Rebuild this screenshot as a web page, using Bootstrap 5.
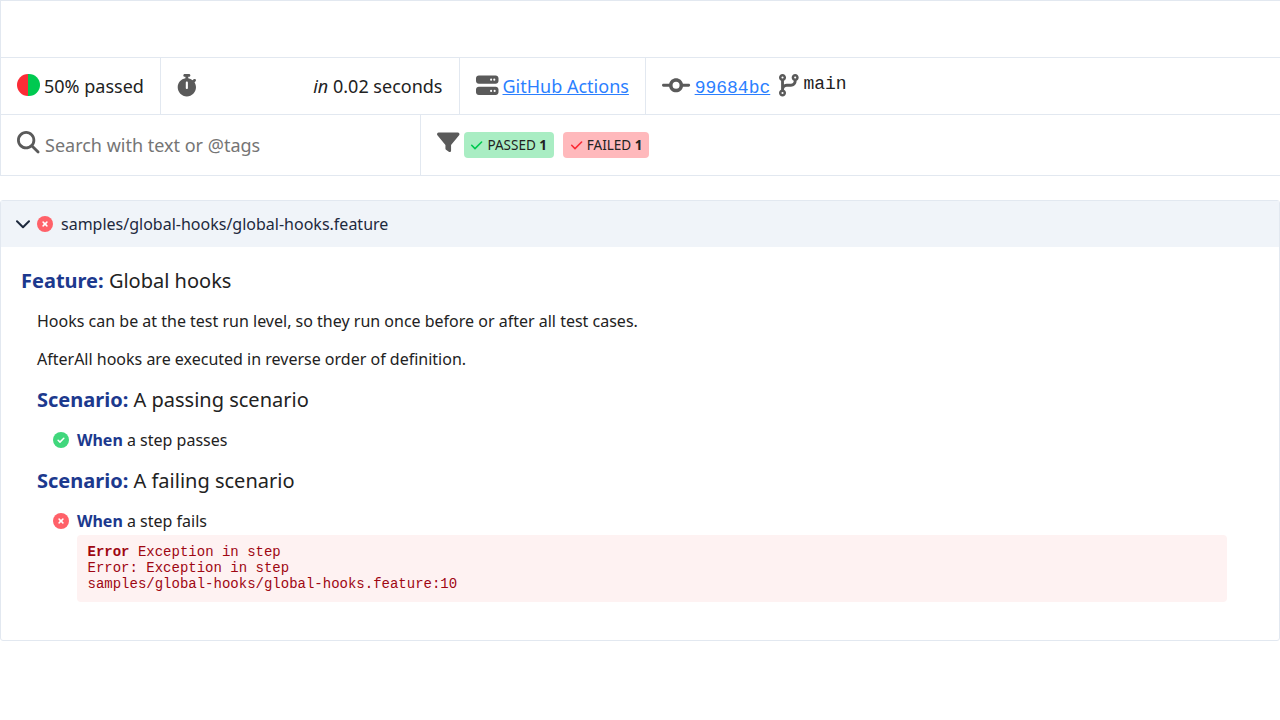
<!DOCTYPE html>
<html lang="en">
<head>
<meta charset="utf-8">
<meta name="viewport" content="width=device-width, initial-scale=1">
<title>Cucumber report</title>
<link href="https://cdn.jsdelivr.net/npm/bootstrap@5.3.0/dist/css/bootstrap.min.css" rel="stylesheet">
<style>
:root{--line:#e2e8f0;--keyword:#1c398e;--link:#2b7fff}
body{font-family:"Noto Sans",sans-serif;color:#222;font-size:16px;line-height:24px;overflow:hidden}
.summary{border:1px solid var(--line);border-right:0;font-size:18px;line-height:27px;margin-bottom:24px}
.summary-row{border-bottom:1px solid var(--line);height:57px}
.summary-row:last-child{border-bottom:0;height:60px}
.cell{display:flex;align-items:center;gap:4px;padding:0 16px;border-right:1px solid var(--line);white-space:nowrap}
.cell:last-child{border-right:0}
.cell-rate{width:160px;gap:4.5px}.cell-time{width:299px;padding-right:16.5px}.cell-ci{width:186px}.cell-search{width:420px;gap:5.5px}
.ico{height:22.5px;fill:#5a5a5a;flex:none;display:block;overflow:visible;margin-bottom:2px}
.filters .ico{margin-bottom:6px}
.summary a{color:var(--link)}
.mono{font-family:"Liberation Mono",monospace}
.hash{margin-left:.5px;margin-top:4px}
.branch-ico{margin-left:5px}
.branch-name{margin-bottom:4px;margin-left:.5px}
.pie{width:22.5px;height:22.5px;border-radius:50%;margin-bottom:2px;background:linear-gradient(90deg,#fb2c36 50%,#00c950 50%)}
.search-input{font-size:18px;line-height:27px;color:#222;background:none;outline:0}
.search-input::placeholder{color:#757575;opacity:1}
.status{font-size:13.5px;line-height:20px;height:26px;padding:0 6.75px;border-radius:4px;display:flex;align-items:center;gap:4.25px}
.status svg,.mark-icon{flex:none}
.status-pass{background:#a9edc3}
.status-fail{background:#ffb9bc;margin-left:5px}
.feature{border:1px solid var(--line);border-radius:3px;height:441px}
.feature-head{background:#f0f4f9;height:46px;padding-left:15px;color:#1d293d}
.chevron{margin-right:7px}
.feature-body{padding:19px 20px 0}
h1,h2{font-size:20px;line-height:30px;font-weight:400;margin:0 0 13px}
.desc{margin-bottom:14px}
.kw{color:var(--keyword);font-weight:700}
.step{gap:8px;margin-bottom:14px}
.step-failed{margin-bottom:0}
.trace{margin:2px 32px 0 40px;padding:9px 10.5px;height:67px;border-radius:4px;background:#fef2f2;color:#9f0712;font:14px/16px "Liberation Mono",monospace;overflow:visible}
</style>
</head>
<body>
<svg width="0" height="0" class="position-absolute" aria-hidden="true">
  <symbol id="failed" viewBox="0 0 16 16"><circle cx="8" cy="8" r="8" fill="#ff6169"/><path d="M6.1 6.1l3.8 3.8M9.9 6.1l-3.8 3.8" fill="none" stroke="#fff" stroke-width="1.5" stroke-linecap="round"/></symbol>
  <symbol id="passed" viewBox="0 0 16 16"><circle cx="8" cy="8" r="8" fill="#40d77c"/><path d="M5.1 8.2l1.9 1.9 3.8-3.8" fill="none" stroke="#fff" stroke-width="1.5" stroke-linecap="round" stroke-linejoin="round"/></symbol>
</svg>
<header class="summary">
  <div class="summary-row"></div>
  <div class="summary-row d-flex">
    <div class="cell cell-rate"><span class="pie"></span><span>50% passed</span></div>
    <div class="cell cell-time justify-content-between">
      <svg class="ico" viewBox="0 0 448 512"><path d="M176 0c-17.7 0-32 14.3-32 32s14.3 32 32 32h16V98.4C92.3 113.8 16 200 16 304c0 114.9 93.1 208 208 208s208-93.1 208-208c0-41.8-12.3-80.7-33.5-113.2l24.1-24.1c12.5-12.5 12.5-32.8 0-45.3s-32.8-12.5-45.3 0L355.7 143c-28.1-23-62.2-38.8-99.7-44.6V64h16c17.7 0 32-14.3 32-32s-14.3-32-32-32H224 176zm72 192V320c0 13.3-10.7 24-24 24s-24-10.7-24-24V192c0-13.3 10.7-24 24-24s24 10.7 24 24z"/></svg>
      <span><em>in</em> 0.02 seconds</span>
    </div>
    <div class="cell cell-ci">
      <svg class="ico" viewBox="0 0 512 512"><path d="M64 32C28.7 32 0 60.7 0 96v64c0 35.3 28.7 64 64 64H448c35.3 0 64-28.7 64-64V96c0-35.3-28.7-64-64-64H64zm280 72a24 24 0 1 1 0 48 24 24 0 1 1 0-48zm48 24a24 24 0 1 1 48 0 24 24 0 1 1 -48 0zM64 288c-35.3 0-64 28.7-64 64v64c0 35.3 28.7 64 64 64H448c35.3 0 64-28.7 64-64V352c0-35.3-28.7-64-64-64H64zm280 72a24 24 0 1 1 0 48 24 24 0 1 1 0-48zm56 24a24 24 0 1 1 48 0 24 24 0 1 1 -48 0z"/></svg>
      <a href="#">GitHub Actions</a>
    </div>
    <div class="cell">
      <svg class="ico" viewBox="0 0 640 512"><path d="M320 336a80 80 0 1 0 0-160 80 80 0 1 0 0 160zm156.8-48C462 361 397.4 416 320 416s-142-55-156.8-128H32c-17.7 0-32-14.3-32-32s14.3-32 32-32H163.2C178 151 242.6 96 320 96s142 55 156.8 128H608c17.7 0 32 14.3 32 32s-14.3 32-32 32H476.8z"/></svg>
      <a href="#" class="mono hash">99684bc</a>
      <svg class="ico branch-ico" viewBox="0 0 448 512"><path fill-rule="evenodd" d="M80 104a24 24 0 1 0 0-48 24 24 0 1 0 0 48zm80-24c0 32.8-19.7 61-48 73.3v87.8c18.8-10.9 40.7-17.1 64-17.1h96c35.3 0 64-28.7 64-64v-6.7C307.7 141 288 112.8 288 80c0-44.2 35.8-80 80-80s80 35.8 80 80c0 32.8-19.7 61-48 73.3V160c0 70.7-57.3 128-128 128H176c-35.3 0-64 28.7-64 64v6.7c28.3 12.3 48 40.5 48 73.3c0 44.2-35.8 80-80 80s-80-35.8-80-80c0-32.8 19.7-61 48-73.3V352 153.3C19.7 141 0 112.8 0 80C0 35.8 35.8 0 80 0s80 35.8 80 80zm232 0a24 24 0 1 0 -48 0 24 24 0 1 0 48 0zM80 456a24 24 0 1 0 0-48 24 24 0 1 0 0 48z"/></svg>
      <span class="mono branch-name">main</span>
    </div>
  </div>
  <div class="summary-row filters d-flex">
    <div class="cell cell-search">
      <svg class="ico" viewBox="0 0 512 512"><path d="M416 208c0 45.9-14.9 88.3-40 122.7L502.6 457.4c12.5 12.5 12.5 32.8 0 45.3s-32.8 12.5-45.3 0L330.7 376c-34.4 25.2-76.8 40-122.7 40C93.1 416 0 322.9 0 208S93.1 0 208 0S416 93.1 416 208zM208 352a144 144 0 1 0 0-288 144 144 0 1 0 0 288z"/></svg>
      <input class="search-input border-0 p-0 flex-grow-1" placeholder="Search with text or @tags" aria-label="Search">
    </div>
    <div class="cell">
      <svg class="ico" viewBox="0 0 512 512"><path d="M3.9 54.9C10.5 40.9 24.5 32 40 32H472c15.5 0 29.5 8.9 36.1 22.9s4.6 30.5-5.2 42.5L320 320.9V448c0 12.1-6.8 23.2-17.7 28.6s-23.8 4.3-33.5-3l-64-48c-8.1-6-12.8-15.5-12.8-25.6V320.9L9 97.3C-.7 85.4-2.8 68.8 3.9 54.9z"/></svg>
      <span class="status status-pass"><svg width="13" height="14" viewBox="0 0 13 14"><path d="M1.7 7.3l3.3 3.3 6.6-6.6" fill="none" stroke="#00c950" stroke-width="1.6" stroke-linecap="round" stroke-linejoin="round"/></svg><span>PASSED <b>1</b></span></span>
      <span class="status status-fail"><svg width="13" height="14" viewBox="0 0 13 14"><path d="M1.7 7.3l3.3 3.3 6.6-6.6" fill="none" stroke="#fb2c36" stroke-width="1.6" stroke-linecap="round" stroke-linejoin="round"/></svg><span>FAILED <b>1</b></span></span>
    </div>
  </div>
</header>
<main class="feature">
  <div class="feature-head d-flex align-items-center">
    <svg width="14" height="16" viewBox="0 0 14 16" class="chevron"><path d="M1 5.3l6 6 6-6" fill="none" stroke="#1d293d" stroke-width="2" stroke-linecap="round" stroke-linejoin="round"/></svg>
    <svg class="mark-icon me-2" width="16" height="16"><use href="#failed"/></svg>
    <span>samples/global-hooks/global-hooks.feature</span>
  </div>
  <div class="feature-body">
    <h1><span class="kw">Feature:</span> Global hooks</h1>
    <div class="ps-3">
      <p class="desc">Hooks can be at the test run level, so they run once before or after all test cases.</p>
      <p class="desc">AfterAll hooks are executed in reverse order of definition.</p>
      <h2><span class="kw">Scenario:</span> A passing scenario</h2>
      <div class="step d-flex align-items-center ps-3"><svg class="mark-icon" width="16" height="16"><use href="#passed"/></svg><span><span class="kw">When</span> a step passes</span></div>
      <h2><span class="kw">Scenario:</span> A failing scenario</h2>
      <div class="step step-failed d-flex align-items-center ps-3"><svg class="mark-icon" width="16" height="16"><use href="#failed"/></svg><span><span class="kw">When</span> a step fails</span></div>
      <div class="trace"><div><b>Error</b> Exception in step</div><div>Error: Exception in step</div><div>samples/global-hooks/global-hooks.feature:10</div></div>
    </div>
  </div>
</main>
<script src="https://cdn.jsdelivr.net/npm/bootstrap@5.3.0/dist/js/bootstrap.bundle.min.js"></script>
</body>
</html>
